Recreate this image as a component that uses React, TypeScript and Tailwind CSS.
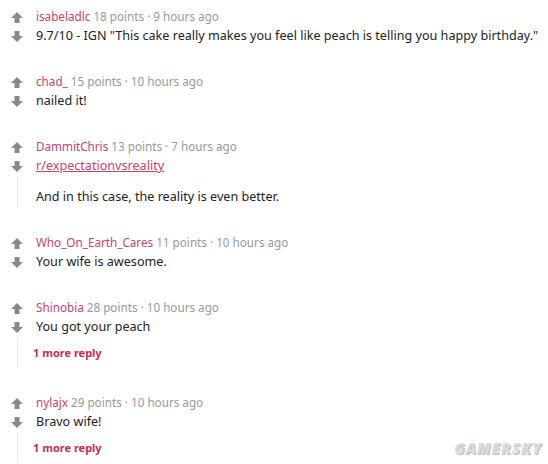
import React from "react";

type Comment = {
  author: string;
  points: number;
  ago: string;
  link?: string;
  body: string;
  more?: boolean;
};

const comments: Comment[] = [
  {
    author: "isabeladlc",
    points: 18,
    ago: "9 hours ago",
    body: '9.7/10 - IGN "This cake really makes you feel like peach is telling you happy birthday."',
  },
  { author: "chad_", points: 15, ago: "10 hours ago", body: "nailed it!" },
  {
    author: "DammitChris",
    points: 13,
    ago: "7 hours ago",
    link: "r/expectationvsreality",
    body: "And in this case, the reality is even better.",
  },
  { author: "Who_On_Earth_Cares", points: 11, ago: "10 hours ago", body: "Your wife is awesome." },
  { author: "Shinobia", points: 28, ago: "10 hours ago", body: "You got your peach", more: true },
  { author: "nylajx", points: 29, ago: "10 hours ago", body: "Bravo wife!", more: true },
];

function Up() {
  return (
    <svg width="12" height="11" viewBox="0 0 12 11">
      <path d="M6 0 L12 6 L8.5 6 L8.5 11 L3.5 11 L3.5 6 L0 6 Z" fill="#878a8c" />
    </svg>
  );
}

function Down() {
  return (
    <svg width="12" height="11" viewBox="0 0 12 11">
      <path d="M6 11 L12 5 L8.5 5 L8.5 0 L3.5 0 L3.5 5 L0 5 Z" fill="#878a8c" />
    </svg>
  );
}

function CommentRow({ c }: { c: Comment }) {
  const threaded = !!c.link || !!c.more;
  return (
    <div className="flex pl-[11px]">
      <div className="flex w-[12px] flex-col items-center">
        <div className="mt-[5px]">
          <Up />
        </div>
        <div className="mt-[8px]">
          <Down />
        </div>
        {threaded && <div className="mt-[5px] w-px flex-1 bg-[#e6e6e6]" />}
      </div>
      <div className="ml-[13px] flex flex-col">
        <div className="h-[18px] text-[11.7px] leading-[18px] text-[#999]">
          <span className="text-[#c4456a]">{c.author}</span> {c.points} points · {c.ago}
        </div>
        {c.link ? (
          <>
            <a className="mt-[1px] text-[12.6px] leading-[20px] text-[#c4456a] underline">{c.link}</a>
            <p className="mt-[11px] text-[12.6px] leading-[20px] text-[#222]">{c.body}</p>
          </>
        ) : (
          <p className="mt-[1px] text-[12.6px] leading-[20px] text-[#222]">{c.body}</p>
        )}
        {c.more && (
          <a className="-ml-[3px] mt-[8px] pb-[6px] text-[11px] font-bold leading-[16px] text-[#c4304f]">
            1 more reply
          </a>
        )}
      </div>
    </div>
  );
}

export default function App() {
  return (
    <main
      className="relative h-[464px] w-[548px] overflow-hidden bg-white pt-[7px]"
      style={{ fontFamily: '"Noto Sans", "Open Sans", sans-serif' }}
    >
      <div className="flex flex-col gap-[26px]">
        {comments.map((c) => (
          <CommentRow key={c.author} c={c} />
        ))}
      </div>
      <div className="absolute bottom-[5px] right-[6px] text-[15px] font-black italic tracking-[1px] text-[#dcdcdc] [text-shadow:1px_1px_0_#bbb]">
        GAMERSKY
      </div>
    </main>
  );
}
